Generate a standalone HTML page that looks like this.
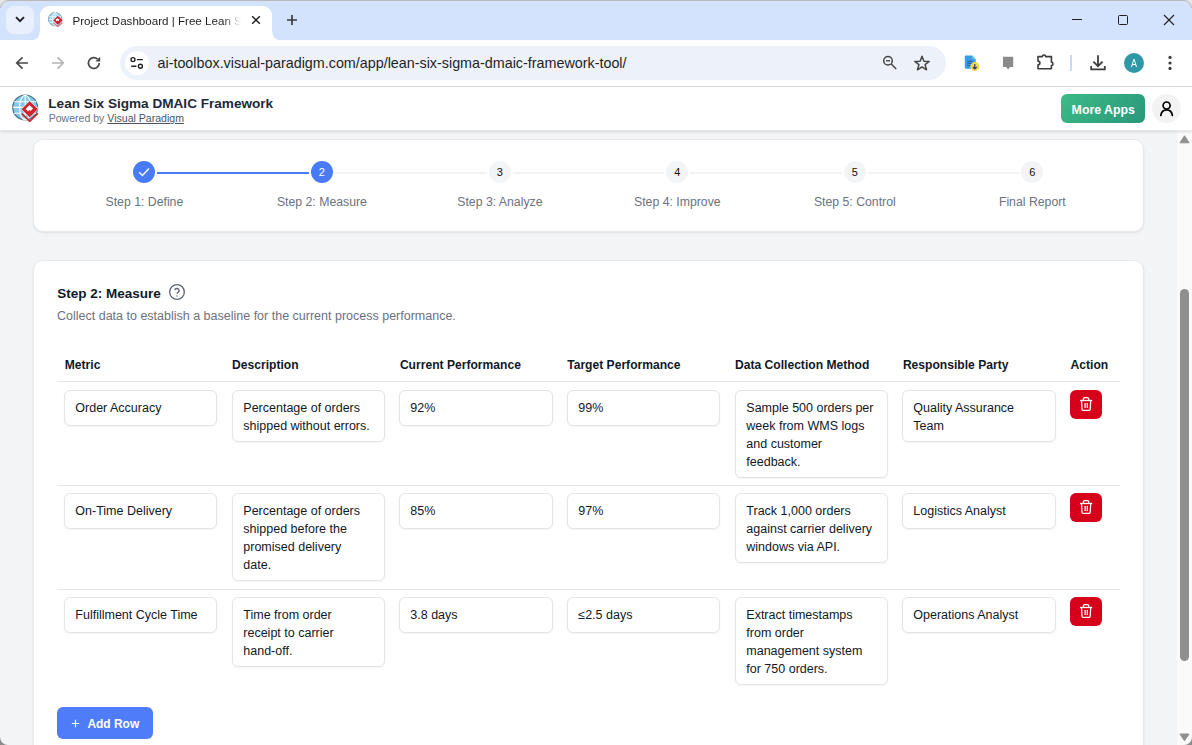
<!DOCTYPE html><html><head><meta charset="utf-8"><title>Lean Six Sigma DMAIC Framework</title><style>
*{box-sizing:border-box;margin:0;padding:0}
html,body{width:1192px;height:745px;overflow:hidden;background:#f3f4f6;font-family:"Liberation Sans",sans-serif}
body{position:relative}
.a{position:absolute}
.t{position:absolute;white-space:nowrap}
svg{display:block}
.b{font-weight:bold}
</style></head><body>
<div class="a" style="left:0;top:0;width:1192px;height:41px;background:#d3e3fd"></div>
<div class="a" style="left:0;top:0;width:1192px;height:1px;background:#b9b9b9"></div>
<div class="a" style="left:40px;top:6px;width:232px;height:35px;background:#fff;border-radius:9px 9px 0 0"></div>
<svg class="a" style="left:30px;top:30px" width="10" height="11"><path d="M0 11H10V0Q10 10 0 11Z" fill="#fff"/></svg>
<svg class="a" style="left:272px;top:30px" width="10" height="11"><path d="M10 11H0V0Q0 10 10 11Z" fill="#fff"/></svg>
<div class="a" style="left:0;top:40px;width:1192px;height:46px;background:#fff"></div>
<div class="a" style="left:0;top:86px;width:1192px;height:1px;background:#dadada"></div>
<div class="a" style="left:120px;top:46px;width:826px;height:34px;border-radius:17px;background:#edf2fa"></div>
<div class="a" style="left:6px;top:6px;width:28px;height:28px;border-radius:8px;background:#e9f0fd"></div><svg class="a" style="left:6px;top:6px" width="28" height="28"><path d="M10 11.2 L14 15.2 L18 11.2" fill="none" stroke="#1f1f1f" stroke-width="1.9"/></svg>
<svg class="a" style="left:48px;top:12.2px" width="14.6" height="14.6" viewBox="0 0 26 26">
<circle cx="12.8" cy="12.8" r="12" fill="#9bd6f5" stroke="#6d8a99" stroke-width="1.4"/>
<path d="M2 8.5H23 M1 13H24 M2 18H22" stroke="#fff" stroke-width="1.3"/>
<ellipse cx="12.8" cy="12.8" rx="5" ry="12" fill="none" stroke="#fff" stroke-width="1.3"/>
<path d="M12.8 1V25" stroke="#fff" stroke-width="1.3"/>
<path d="M17.5 6.5 L26 14.5 L17.5 22.5 L9.5 14.5Z" fill="#d0202f"/>
<path d="M17 10.5 L20.5 14 L18.2 16.3 L17.2 15.3 L15.8 16.7 L13.5 14.4Z" fill="#fff"/>
<path d="M9.5 19 L17.5 26.5 L26 19" fill="none" stroke="#e36a72" stroke-width="1.8"/>
</svg>
<svg class="a" style="left:250px;top:14px" width="12" height="12"><path d="M2.2 2.2L9.8 9.8M9.8 2.2L2.2 9.8" stroke="#1f1f1f" stroke-width="1.5"/></svg>
<svg class="a" style="left:285px;top:13px" width="14" height="14"><path d="M7 2V12M2 7H12" stroke="#3c3c3c" stroke-width="1.7"/></svg>
<div class="a" style="left:1072px;top:19px;width:10px;height:1px;background:#1f1f1f"></div>
<div class="a" style="left:1118px;top:15px;width:10px;height:10px;border:1px solid #1f1f1f;border-radius:1.5px"></div>
<svg class="a" style="left:1162px;top:13px" width="14" height="14"><path d="M2 2L12 12M12 2L2 12" stroke="#1f1f1f" stroke-width="1.1"/></svg>
<svg class="a" style="left:14px;top:55px" width="16" height="16"><path d="M14 8H3.2M8.5 2.4L2.8 8L8.5 13.6" fill="none" stroke="#474747" stroke-width="1.7"/></svg>
<svg class="a" style="left:50px;top:55px" width="16" height="16"><path d="M2 8H12.8M7.5 2.4L13.2 8L7.5 13.6" fill="none" stroke="#b4b4b4" stroke-width="1.7"/></svg>
<svg class="a" style="left:86px;top:55px" width="16" height="16"><path d="M13.2 8A5.4 5.4 0 1 1 11.6 4.2" fill="none" stroke="#474747" stroke-width="1.7"/><path d="M14.2 1.8V6.6H9.4Z" fill="#474747"/></svg>
<div class="a" style="left:125px;top:51px;width:24px;height:24px;border-radius:50%;background:#fff"></div><svg class="a" style="left:125px;top:51px" width="24" height="24"><circle cx="8" cy="8.6" r="2" fill="none" stroke="#1f1f1f" stroke-width="1.35"/><circle cx="15.4" cy="15.2" r="2" fill="none" stroke="#1f1f1f" stroke-width="1.35"/><path d="M11.9 8.6H17.8M6.2 15.2H11.4" stroke="#1f1f1f" stroke-width="1.4"/></svg>
<svg class="a" style="left:880px;top:53px" width="18" height="18"><circle cx="8" cy="7.8" r="4.3" fill="none" stroke="#474747" stroke-width="1.5"/><path d="M6 7.8H10" stroke="#474747" stroke-width="1.4"/><path d="M11.2 11L16.2 16" stroke="#474747" stroke-width="1.6"/></svg>
<svg class="a" style="left:912px;top:53px" width="20" height="20"><path d="M10 3.2L11.9 8.2L17.2 8.4L13.1 11.7L14.5 16.8L10 13.9L5.5 16.8L6.9 11.7L2.8 8.4L8.1 8.2Z" fill="none" stroke="#474747" stroke-width="1.5" stroke-linejoin="round"/></svg>
<svg class="a" style="left:962px;top:53px" width="20" height="20">
<path d="M3.6 2.6Q2.8 2.6 2.8 3.6V14.6Q2.8 15.7 3.8 15.7H12.8Q13.7 15.7 13.7 14.7V6.2L10.2 2.6Z" fill="#3b9be8"/>
<path d="M10.2 2.6V6.2H13.7Z" fill="#57d3d0"/>
<path d="M5.2 8.3H10.5M5.2 10.4H10.5M5.2 12.5H9" stroke="#1c5aa8" stroke-width="0.9"/>
<circle cx="12.8" cy="13.6" r="4.5" fill="#f7d93b"/>
<path d="M12.8 10.9V15.8M10.9 14L12.8 15.9L14.7 14" fill="none" stroke="#1d3f75" stroke-width="1.2"/>
</svg>
<svg class="a" style="left:1000px;top:54px" width="16" height="18"><path d="M3 2.8H13.2V13H10L8.1 15.6L6.2 13H3Z" fill="#8a8a8a"/></svg>
<svg class="a" style="left:1035px;top:53px" width="20" height="19"><path d="M3 3.6H7.4A1.6 1.6 0 0 1 10.6 3.6H16.4V9.3A1.6 1.6 0 0 1 16.4 12.5V15.8H3V11.9A1.9 1.9 0 0 0 3 8.1Z" fill="none" stroke="#3c3c3c" stroke-width="1.6" stroke-linejoin="round"/></svg>
<div class="a" style="left:1070px;top:55px;width:2px;height:16px;background:#c8daf8"></div>
<svg class="a" style="left:1089px;top:54px" width="18" height="18"><path d="M9 1.2V12.2M4.4 7.6L9 12.2L13.6 7.6" fill="none" stroke="#3c3c3c" stroke-width="1.8"/><path d="M2.2 12V15.4H15.8V12" fill="none" stroke="#3c3c3c" stroke-width="1.8"/></svg>
<div class="a" style="left:1124px;top:53px;width:20px;height:20px;border-radius:50%;background:#2f97a6"></div><div class="a" style="left:1124px;top:53px;width:20px;height:20px;color:#fff;font-size:10.5px;line-height:20px;text-align:center;transform:scaleX(.85)">A</div>
<svg class="a" style="left:1166px;top:54px" width="8" height="18"><circle cx="4" cy="3.4" r="1.6" fill="#3c3c3c"/><circle cx="4" cy="9" r="1.6" fill="#3c3c3c"/><circle cx="4" cy="14.4" r="1.6" fill="#3c3c3c"/></svg>
<div class="t " style="left:157.5px;top:53.83px;font-size:14.34px;line-height:18px;color:#1f1f1f">ai-toolbox.visual-paradigm.com/app/lean-six-sigma-dmaic-framework-tool/</div>
<div class="t " style="left:72.5px;top:11.98px;font-size:11.6px;line-height:18px;color:#1f1f1f;width:168px;overflow:hidden;-webkit-mask-image:linear-gradient(90deg,#000 150px,transparent 168px)">Project Dashboard | Free Lean Six Sigma</div>
<div class="a" style="left:1177px;top:130px;width:15px;height:615px;background:#fafafa"></div>
<div class="a" style="left:0;top:87px;width:1192px;height:44px;background:#fff;border-bottom:1px solid #e5e7eb;box-shadow:0 1px 3px rgba(0,0,0,.12)"></div>
<svg class="a" style="left:12px;top:94px" width="27" height="28" viewBox="0 0 27 28">
<circle cx="13.2" cy="13.5" r="12.4" fill="#86c9ee" stroke="#4f7689" stroke-width="1.3"/>
<path d="M2 7.8H24.5 M1 13.4H25.5 M2 19.2H24" stroke="#fff" stroke-width="1.1"/>
<ellipse cx="13.2" cy="13.5" rx="5.6" ry="12.3" fill="none" stroke="#fff" stroke-width="1.1"/>
<path d="M13.2 1.2V25.8" stroke="#fff" stroke-width="1.1"/>
<path d="M17.7 6.8 L26.2 15.2 L17.7 23.6 L9.2 15.2Z" fill="#d2232f" stroke="#fff" stroke-width="0.6"/>
<path d="M17.4 11 L21 14.6 L18.6 17 L17.5 15.9 L16 17.4 L13.7 15.1Z" fill="#fff"/>
<path d="M9.6 19.4 L17.7 27.3 L25.8 19.4" fill="none" stroke="#d2232f" stroke-width="1.7"/>
</svg>
<div class="t b" style="left:48.3px;top:94.99px;font-size:13.58px;line-height:18px;color:#1f2937">Lean Six Sigma DMAIC Framework</div>
<div class="t " style="left:48.7px;top:109.34px;font-size:10.55px;line-height:18px;color:#6b7280">Powered by <u style="color:#4b5563">Visual Paradigm</u></div>
<div class="a" style="left:1061px;top:94px;width:84px;height:29px;border-radius:6px;background:linear-gradient(135deg,#3cbb86,#2a977b)"></div>
<div class="t b" style="left:1071.6px;top:100.52px;font-size:12.35px;line-height:18px;color:#fff">More Apps</div>
<div class="a" style="left:1152px;top:94px;width:29px;height:29px;border-radius:50%;background:#f3f3f3"></div>
<svg class="a" style="left:1152px;top:94px" width="29" height="29"><circle cx="14.6" cy="11.5" r="3.5" fill="none" stroke="#000" stroke-width="1.7"/><path d="M8.8 21.5C9.4 17.6 11.6 15.9 14.6 15.9C17.6 15.9 19.8 17.6 20.4 21.5" fill="none" stroke="#000" stroke-width="1.7" stroke-linecap="round"/></svg>
<div class="a" style="left:33px;top:139px;width:1111px;height:93px;background:#fff;border-radius:10px;border:1px solid #e8e9ec;box-shadow:0 1px 2px rgba(0,0,0,.09)"></div>
<div class="a" style="left:157.4px;top:172px;width:151.5px;height:2px;background:#4a7bf7"></div>
<div class="a" style="left:334.9px;top:172px;width:152.0px;height:2px;background:#f1f2f4"></div>
<div class="a" style="left:512.9px;top:172px;width:151.4px;height:2px;background:#f1f2f4"></div>
<div class="a" style="left:690.3px;top:172px;width:151.5px;height:2px;background:#f1f2f4"></div>
<div class="a" style="left:867.8px;top:172px;width:151.5px;height:2px;background:#f1f2f4"></div>
<div class="a" style="left:133.4px;top:161px;width:22px;height:22px;border-radius:50%;background:#4a7bf7"></div>
<div class="t" style="left:55.4px;top:192.65px;width:178px;text-align:center;font-size:12.27px;line-height:18px;color:#6b7280">Step 1: Define</div>
<div class="a" style="left:310.9px;top:161px;width:22px;height:22px;border-radius:50%;background:#4a7bf7"></div>
<div class="t" style="left:310.9px;top:162.7px;width:22px;text-align:center;font-size:11px;line-height:18px;color:#fff">2</div>
<div class="t" style="left:232.9px;top:192.65px;width:178px;text-align:center;font-size:12.27px;line-height:18px;color:#6b7280">Step 2: Measure</div>
<div class="a" style="left:488.9px;top:161px;width:22px;height:22px;border-radius:50%;background:#f3f4f6"></div>
<div class="t" style="left:488.9px;top:162.7px;width:22px;text-align:center;font-size:11px;line-height:18px;color:#111">3</div>
<div class="t" style="left:410.9px;top:192.65px;width:178px;text-align:center;font-size:12.27px;line-height:18px;color:#6b7280">Step 3: Analyze</div>
<div class="a" style="left:666.3px;top:161px;width:22px;height:22px;border-radius:50%;background:#f3f4f6"></div>
<div class="t" style="left:666.3px;top:162.7px;width:22px;text-align:center;font-size:11px;line-height:18px;color:#111">4</div>
<div class="t" style="left:588.3px;top:192.65px;width:178px;text-align:center;font-size:12.27px;line-height:18px;color:#6b7280">Step 4: Improve</div>
<div class="a" style="left:843.8px;top:161px;width:22px;height:22px;border-radius:50%;background:#f3f4f6"></div>
<div class="t" style="left:843.8px;top:162.7px;width:22px;text-align:center;font-size:11px;line-height:18px;color:#111">5</div>
<div class="t" style="left:765.8px;top:192.65px;width:178px;text-align:center;font-size:12.27px;line-height:18px;color:#6b7280">Step 5: Control</div>
<div class="a" style="left:1021.3px;top:161px;width:22px;height:22px;border-radius:50%;background:#f3f4f6"></div>
<div class="t" style="left:1021.3px;top:162.7px;width:22px;text-align:center;font-size:11px;line-height:18px;color:#111">6</div>
<div class="t" style="left:943.3px;top:192.65px;width:178px;text-align:center;font-size:12.27px;line-height:18px;color:#6b7280">Final Report</div>
<svg class="a" style="left:133px;top:161px" width="22" height="22"><path d="M6.2 11.3L9.4 14.5L16 7.5" fill="none" stroke="#fff" stroke-width="1.3"/></svg>
<div class="a" style="left:33px;top:260px;width:1111px;height:560px;background:#fff;border-radius:10px;border:1px solid #e8e9ec;box-shadow:0 1px 2px rgba(0,0,0,.09)"></div>
<div class="t b" style="left:57.3px;top:284.82px;font-size:13.5px;line-height:18px;color:#111827">Step 2: Measure</div>
<svg class="a" style="left:169px;top:284px" width="16" height="16" viewBox="0 0 24 24"><circle cx="12" cy="12" r="11" fill="none" stroke="#60677a" stroke-width="2"/><path d="M8.6 9A3.4 3.4 0 0 1 15.2 10.1C15.2 12.4 12 13 12 14.6" fill="none" stroke="#60677a" stroke-width="2.2"/><path d="M12 17.4V18.8" stroke="#60677a" stroke-width="2.4"/></svg>
<div class="t " style="left:57px;top:306.97px;font-size:12.5px;line-height:18px;color:#6b7280">Collect data to establish a baseline for the current process performance.</div>
<div class="t b" style="left:64.8px;top:355.81px;font-size:12.1px;line-height:18px;color:#111827">Metric</div>
<div class="t b" style="left:232.1px;top:355.81px;font-size:12.1px;line-height:18px;color:#111827">Description</div>
<div class="t b" style="left:399.9px;top:355.81px;font-size:12.1px;line-height:18px;color:#111827">Current Performance</div>
<div class="t b" style="left:567.2px;top:355.81px;font-size:12.1px;line-height:18px;color:#111827">Target Performance</div>
<div class="t b" style="left:735px;top:355.81px;font-size:12.1px;line-height:18px;color:#111827">Data Collection Method</div>
<div class="t b" style="left:902.9px;top:355.81px;font-size:12.1px;line-height:18px;color:#111827">Responsible Party</div>
<div class="t b" style="left:1070.6px;top:355.81px;font-size:12.1px;line-height:18px;color:#111827">Action</div>
<div class="a" style="left:57px;top:381px;width:1063px;height:1px;background:#e5e7eb"></div>
<div class="a" style="left:57px;top:485px;width:1063px;height:1px;background:#e5e7eb"></div>
<div class="a" style="left:57px;top:589px;width:1063px;height:1px;background:#e5e7eb"></div>
<div class="a" style="left:64px;top:390px;width:153px;height:36px;border:1px solid #e2e4e8;border-radius:6px;background:#fff;box-shadow:0 1px 2px rgba(0,0,0,.05)"></div>
<div class="t " style="left:75.3px;top:398.57px;font-size:12.5px;line-height:18px;color:#111827">Order Accuracy</div>
<div class="a" style="left:232px;top:390px;width:153px;height:52px;border:1px solid #e2e4e8;border-radius:6px;background:#fff;box-shadow:0 1px 2px rgba(0,0,0,.05)"></div>
<div class="t " style="left:243.3px;top:398.57px;font-size:12.5px;line-height:18px;color:#111827">Percentage of orders</div>
<div class="t " style="left:243.3px;top:416.57px;font-size:12.5px;line-height:18px;color:#111827">shipped without errors.</div>
<div class="a" style="left:399px;top:390px;width:154px;height:36px;border:1px solid #e2e4e8;border-radius:6px;background:#fff;box-shadow:0 1px 2px rgba(0,0,0,.05)"></div>
<div class="t " style="left:410.3px;top:398.57px;font-size:12.5px;line-height:18px;color:#111827">92%</div>
<div class="a" style="left:567px;top:390px;width:153px;height:36px;border:1px solid #e2e4e8;border-radius:6px;background:#fff;box-shadow:0 1px 2px rgba(0,0,0,.05)"></div>
<div class="t " style="left:578.3px;top:398.57px;font-size:12.5px;line-height:18px;color:#111827">99%</div>
<div class="a" style="left:735px;top:390px;width:153px;height:88px;border:1px solid #e2e4e8;border-radius:6px;background:#fff;box-shadow:0 1px 2px rgba(0,0,0,.05)"></div>
<div class="t " style="left:746.3px;top:398.57px;font-size:12.5px;line-height:18px;color:#111827">Sample 500 orders per</div>
<div class="t " style="left:746.3px;top:416.57px;font-size:12.5px;line-height:18px;color:#111827">week from WMS logs</div>
<div class="t " style="left:746.3px;top:434.57px;font-size:12.5px;line-height:18px;color:#111827">and customer</div>
<div class="t " style="left:746.3px;top:452.57px;font-size:12.5px;line-height:18px;color:#111827">feedback.</div>
<div class="a" style="left:902px;top:390px;width:154px;height:52px;border:1px solid #e2e4e8;border-radius:6px;background:#fff;box-shadow:0 1px 2px rgba(0,0,0,.05)"></div>
<div class="t " style="left:913.3px;top:398.57px;font-size:12.5px;line-height:18px;color:#111827">Quality Assurance</div>
<div class="t " style="left:913.3px;top:416.57px;font-size:12.5px;line-height:18px;color:#111827">Team</div>
<div class="a" style="left:1070px;top:390px;width:32px;height:29px;border-radius:6px;background:#d7001b"></div>
<svg class="a" style="left:1078px;top:395px" width="16" height="16" viewBox="0 0 16 16"><path d="M2 5.5H14.2" stroke="#fff" stroke-width="1.3"/><path d="M5.4 5.5V4.1Q5.4 2.6 6.9 2.6H9.3Q10.8 2.6 10.8 4.1V5.5" fill="none" stroke="#fff" stroke-width="1.3"/><path d="M3.5 5.5L4 14.3Q4.1 15.3 5.1 15.3H11.1Q12.1 15.3 12.2 14.3L12.7 5.5" fill="none" stroke="#fff" stroke-width="1.3"/><path d="M7.1 8V12.9M9.3 8V12.9" stroke="#fff" stroke-width="1.3"/></svg>
<div class="a" style="left:64px;top:493px;width:153px;height:36px;border:1px solid #e2e4e8;border-radius:6px;background:#fff;box-shadow:0 1px 2px rgba(0,0,0,.05)"></div>
<div class="t " style="left:75.3px;top:501.57px;font-size:12.5px;line-height:18px;color:#111827">On-Time Delivery</div>
<div class="a" style="left:232px;top:493px;width:153px;height:88px;border:1px solid #e2e4e8;border-radius:6px;background:#fff;box-shadow:0 1px 2px rgba(0,0,0,.05)"></div>
<div class="t " style="left:243.3px;top:501.57px;font-size:12.5px;line-height:18px;color:#111827">Percentage of orders</div>
<div class="t " style="left:243.3px;top:519.57px;font-size:12.5px;line-height:18px;color:#111827">shipped before the</div>
<div class="t " style="left:243.3px;top:537.57px;font-size:12.5px;line-height:18px;color:#111827">promised delivery</div>
<div class="t " style="left:243.3px;top:555.57px;font-size:12.5px;line-height:18px;color:#111827">date.</div>
<div class="a" style="left:399px;top:493px;width:154px;height:36px;border:1px solid #e2e4e8;border-radius:6px;background:#fff;box-shadow:0 1px 2px rgba(0,0,0,.05)"></div>
<div class="t " style="left:410.3px;top:501.57px;font-size:12.5px;line-height:18px;color:#111827">85%</div>
<div class="a" style="left:567px;top:493px;width:153px;height:36px;border:1px solid #e2e4e8;border-radius:6px;background:#fff;box-shadow:0 1px 2px rgba(0,0,0,.05)"></div>
<div class="t " style="left:578.3px;top:501.57px;font-size:12.5px;line-height:18px;color:#111827">97%</div>
<div class="a" style="left:735px;top:493px;width:153px;height:70px;border:1px solid #e2e4e8;border-radius:6px;background:#fff;box-shadow:0 1px 2px rgba(0,0,0,.05)"></div>
<div class="t " style="left:746.3px;top:501.57px;font-size:12.5px;line-height:18px;color:#111827">Track 1,000 orders</div>
<div class="t " style="left:746.3px;top:519.57px;font-size:12.5px;line-height:18px;color:#111827">against carrier delivery</div>
<div class="t " style="left:746.3px;top:537.57px;font-size:12.5px;line-height:18px;color:#111827">windows via API.</div>
<div class="a" style="left:902px;top:493px;width:154px;height:36px;border:1px solid #e2e4e8;border-radius:6px;background:#fff;box-shadow:0 1px 2px rgba(0,0,0,.05)"></div>
<div class="t " style="left:913.3px;top:501.57px;font-size:12.5px;line-height:18px;color:#111827">Logistics Analyst</div>
<div class="a" style="left:1070px;top:493px;width:32px;height:29px;border-radius:6px;background:#d7001b"></div>
<svg class="a" style="left:1078px;top:498px" width="16" height="16" viewBox="0 0 16 16"><path d="M2 5.5H14.2" stroke="#fff" stroke-width="1.3"/><path d="M5.4 5.5V4.1Q5.4 2.6 6.9 2.6H9.3Q10.8 2.6 10.8 4.1V5.5" fill="none" stroke="#fff" stroke-width="1.3"/><path d="M3.5 5.5L4 14.3Q4.1 15.3 5.1 15.3H11.1Q12.1 15.3 12.2 14.3L12.7 5.5" fill="none" stroke="#fff" stroke-width="1.3"/><path d="M7.1 8V12.9M9.3 8V12.9" stroke="#fff" stroke-width="1.3"/></svg>
<div class="a" style="left:64px;top:597px;width:153px;height:36px;border:1px solid #e2e4e8;border-radius:6px;background:#fff;box-shadow:0 1px 2px rgba(0,0,0,.05)"></div>
<div class="t " style="left:75.3px;top:605.57px;font-size:12.5px;line-height:18px;color:#111827">Fulfillment Cycle Time</div>
<div class="a" style="left:232px;top:597px;width:153px;height:70px;border:1px solid #e2e4e8;border-radius:6px;background:#fff;box-shadow:0 1px 2px rgba(0,0,0,.05)"></div>
<div class="t " style="left:243.3px;top:605.57px;font-size:12.5px;line-height:18px;color:#111827">Time from order</div>
<div class="t " style="left:243.3px;top:623.57px;font-size:12.5px;line-height:18px;color:#111827">receipt to carrier</div>
<div class="t " style="left:243.3px;top:641.57px;font-size:12.5px;line-height:18px;color:#111827">hand-off.</div>
<div class="a" style="left:399px;top:597px;width:154px;height:36px;border:1px solid #e2e4e8;border-radius:6px;background:#fff;box-shadow:0 1px 2px rgba(0,0,0,.05)"></div>
<div class="t " style="left:410.3px;top:605.57px;font-size:12.5px;line-height:18px;color:#111827">3.8 days</div>
<div class="a" style="left:567px;top:597px;width:153px;height:36px;border:1px solid #e2e4e8;border-radius:6px;background:#fff;box-shadow:0 1px 2px rgba(0,0,0,.05)"></div>
<div class="t " style="left:578.3px;top:605.57px;font-size:12.5px;line-height:18px;color:#111827">≤2.5 days</div>
<div class="a" style="left:735px;top:597px;width:153px;height:88px;border:1px solid #e2e4e8;border-radius:6px;background:#fff;box-shadow:0 1px 2px rgba(0,0,0,.05)"></div>
<div class="t " style="left:746.3px;top:605.57px;font-size:12.5px;line-height:18px;color:#111827">Extract timestamps</div>
<div class="t " style="left:746.3px;top:623.57px;font-size:12.5px;line-height:18px;color:#111827">from order</div>
<div class="t " style="left:746.3px;top:641.57px;font-size:12.5px;line-height:18px;color:#111827">management system</div>
<div class="t " style="left:746.3px;top:659.57px;font-size:12.5px;line-height:18px;color:#111827">for 750 orders.</div>
<div class="a" style="left:902px;top:597px;width:154px;height:36px;border:1px solid #e2e4e8;border-radius:6px;background:#fff;box-shadow:0 1px 2px rgba(0,0,0,.05)"></div>
<div class="t " style="left:913.3px;top:605.57px;font-size:12.5px;line-height:18px;color:#111827">Operations Analyst</div>
<div class="a" style="left:1070px;top:597px;width:32px;height:29px;border-radius:6px;background:#d7001b"></div>
<svg class="a" style="left:1078px;top:602px" width="16" height="16" viewBox="0 0 16 16"><path d="M2 5.5H14.2" stroke="#fff" stroke-width="1.3"/><path d="M5.4 5.5V4.1Q5.4 2.6 6.9 2.6H9.3Q10.8 2.6 10.8 4.1V5.5" fill="none" stroke="#fff" stroke-width="1.3"/><path d="M3.5 5.5L4 14.3Q4.1 15.3 5.1 15.3H11.1Q12.1 15.3 12.2 14.3L12.7 5.5" fill="none" stroke="#fff" stroke-width="1.3"/><path d="M7.1 8V12.9M9.3 8V12.9" stroke="#fff" stroke-width="1.3"/></svg>
<div class="a" style="left:57px;top:707px;width:96px;height:32px;border-radius:6px;background:#4f7df9"></div>
<svg class="a" style="left:70px;top:718px" width="11" height="11"><path d="M5.5 1.8V9.2M1.8 5.5H9.2" stroke="#fff" stroke-width="1.2"/></svg>
<div class="t b" style="left:87.4px;top:714.86px;font-size:11.96px;line-height:18px;color:#fff">Add Row</div>
<svg class="a" style="left:1176px;top:132px" width="15" height="14"><path d="M4 10.8L8.5 3.8L13 10.8Z" fill="#8f8f8f" stroke="#8f8f8f" stroke-width="1" stroke-linejoin="round"/></svg>
<div class="a" style="left:1180px;top:289px;width:9px;height:372px;background:#8f8f8f;border-radius:4.5px"></div>
<svg class="a" style="left:1176px;top:731px" width="15" height="12"><path d="M4 3L13 3L8.5 9.8Z" fill="#8f8f8f" stroke="#8f8f8f" stroke-width="1" stroke-linejoin="round"/></svg>
<svg class="a" style="left:0;top:0" width="8" height="8"><path d="M0 0H8V1A7 7 0 0 0 1 8H0Z" fill="#e6e6e6"/><path d="M8 0.5A7.5 7.5 0 0 0 0.5 8" fill="none" stroke="#b9b9b9" stroke-width="1"/></svg>
<svg class="a" style="left:1184px;top:0" width="8" height="8"><path d="M8 0H0V1A7 7 0 0 1 7 8H8Z" fill="#e6e6e6"/><path d="M0 0.5A7.5 7.5 0 0 1 7.5 8" fill="none" stroke="#b9b9b9" stroke-width="1"/></svg>
<svg class="a" style="left:0;top:737px" width="8" height="8"><path d="M0 0A8 8 0 0 0 8 8H0Z" fill="#8c8c8c"/></svg>
<svg class="a" style="left:1184px;top:737px" width="8" height="8"><path d="M8 0A8 8 0 0 1 0 8H8Z" fill="#8c8c8c"/></svg>
</body></html>
